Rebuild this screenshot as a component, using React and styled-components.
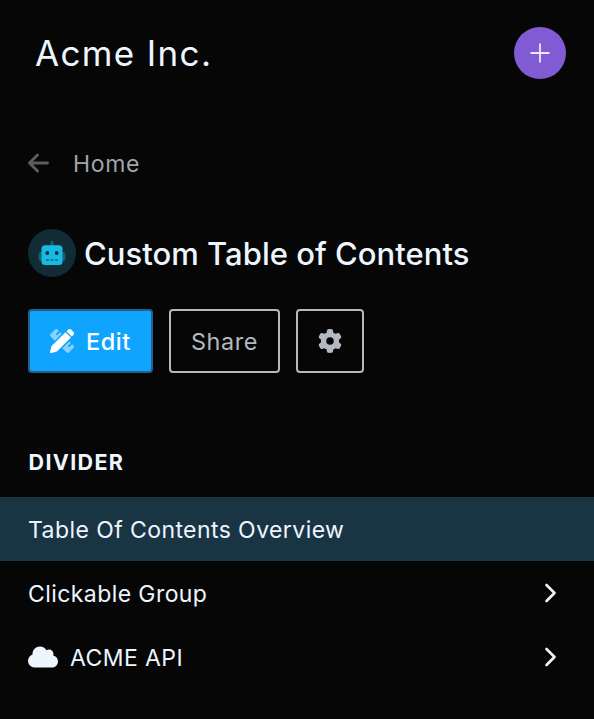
import React from "react";
import styled, { createGlobalStyle } from "styled-components";
import { FaCloud, FaGear } from "react-icons/fa6";

const GlobalStyle = createGlobalStyle`
  * { box-sizing: border-box; }
  body {
    margin: 0;
    background: #060606;
    color: #edf6ff;
    font-family: Inter, "Liberation Sans", sans-serif;
  }
`;

const Sidebar = styled.main`
  width: 594px;
  height: 719px;
  overflow: hidden;
  background: #060606;
`;

const Header = styled.header`
  display: flex;
  align-items: center;
  justify-content: space-between;
  height: 106px;
  padding: 0 28px 0 35px;
`;

const Brand = styled.div`
  font-size: 35px;
  line-height: 44px;
  font-weight: 430;
  letter-spacing: 1.35px;
`;

const AddButton = styled.button`
  display: grid;
  place-items: center;
  width: 52px;
  height: 52px;
  padding: 0;
  border: 0;
  border-radius: 50%;
  background: #805bd4;
  color: #eee8fb;
`;

const BackLink = styled.a`
  display: flex;
  align-items: center;
  gap: 24px;
  height: 32px;
  margin: 42px 28px 0;
  color: #a0a5ab;
  font-size: 23px;
  line-height: 28px;
  letter-spacing: 0.65px;

  svg {
    margin-bottom: 2px;
    color: #5b5e61;
  }
`;

const TitleRow = styled.div`
  display: flex;
  align-items: center;
  gap: 8px;
  height: 48px;
  margin: 49px 28px 0;
`;

const Avatar = styled.div`
  display: grid;
  place-items: center;
  width: 48px;
  height: 48px;
  border-radius: 50%;
  background: #112c34;
`;

const Title = styled.h1`
  margin: 0;
  padding-top: 2px;
  font-size: 31px;
  line-height: 40px;
  font-weight: 500;
  letter-spacing: 0.03px;
`;

const Actions = styled.div`
  display: flex;
  gap: 16px;
  margin: 32px 28px 0;
`;

const Button = styled.button`
  display: flex;
  align-items: center;
  justify-content: center;
  gap: 12px;
  width: ${({ $width }) => $width}px;
  height: 64px;
  padding: 0;
  border: 2px solid ${({ $primary }) => ($primary ? "#245f8e" : "#b3b9bf")};
  border-radius: 4px;
  background: ${({ $primary }) => ($primary ? "#0fa5ff" : "transparent")};
  color: ${({ $primary }) => ($primary ? "#ffffff" : "#b3b9bf")};
  font-family: inherit;
  font-size: 23.4px;
  line-height: 28px;
  font-weight: ${({ $primary }) => ($primary ? 500 : 400)};
  letter-spacing: 0.6px;
`;

const ButtonLabel = styled.span`
  padding-top: 1px;
`;

const SectionLabel = styled.h2`
  margin: 75px 28px 0 28.5px;
  height: 49px;
  font-size: 21.5px;
  line-height: 28px;
  font-weight: 700;
  letter-spacing: 1.35px;
`;

const Navigation = styled.nav`
  display: flex;
  flex-direction: column;
`;

const NavItem = styled.a`
  display: flex;
  align-items: center;
  gap: 12px;
  height: 64px;
  padding: 0 36px 0 28px;
  background: ${({ $active }) => ($active ? "#193443" : "transparent")};
  font-size: 23px;
  line-height: 28px;
  letter-spacing: 0.42px;
`;

const NavLabel = styled.span`
  flex: 1;
  padding-top: 1px;
`;

const CloudIcon = styled(FaCloud)`
  width: 30px;
  height: 24px;
`;

const Chevron = styled.svg`
  width: 14px;
  height: 22px;
`;

const PlusIcon = () => (
  <svg width="22" height="22" viewBox="0 0 22 22" fill="none">
    <path d="M11 1.5v19M1.5 11h19" stroke="currentColor" strokeWidth="1.8" />
  </svg>
);

const BackIcon = () => (
  <svg width="21" height="20" viewBox="0 0 21 20" fill="none">
    <path
      d="M9.5 2L1.5 10l8 8M2 10h17.5"
      stroke="currentColor"
      strokeWidth="2.9"
      strokeLinecap="round"
      strokeLinejoin="round"
    />
  </svg>
);

const RobotIcon = () => (
  <svg width="28" height="24" viewBox="0 0 28 24">
    <path
      d="M12.5 5V1.3a1.5 1.5 0 0 1 3 0V5zM5 11v9H2.5a2 2 0 0 1-2-2v-5a2 2 0 0 1 2-2zm18 0v9h2.5a2 2 0 0 0 2-2v-5a2 2 0 0 0-2-2z"
      fill="#126070"
    />
    <rect x="3.5" y="4.2" width="21" height="19.8" rx="3.5" fill="#16bbe5" />
    <circle cx="9.3" cy="12" r="1.9" fill="#112c34" />
    <circle cx="18.7" cy="12" r="1.9" fill="#112c34" />
    <path d="M8 19h3m1.5 0h3M17 19h3" stroke="#126070" strokeWidth="1.7" />
  </svg>
);

const DraftIcon = () => (
  <svg width="24" height="24" viewBox="0 0 512 512" fill="currentColor">
    <path
      d="M110 10L10 110c-13 13-13 33 0 46l92 92L248 102l-33-33-58 58c-5 5-12 5-17 0l-11-11c-5-5-5-12 0-17l58-58-31-31c-13-13-33-13-46 0zM410 264L264 410l92 92c13 13 33 13 46 0l100-100c13-13 13-33 0-46l-31-31-58 58c-5 5-12 5-17 0l-11-11c-5-5-5-12 0-17l58-58z"
      opacity="0.5"
    />
    <path d="M331 67L33 365 1 484c-3 18 9 30 27 27l119-32 298-298zM498 127l-34 34L351 48l34-34c19-19 49-19 67 0l46 46c19 19 19 49 0 67z" />
  </svg>
);

const ChevronIcon = () => (
  <Chevron viewBox="0 0 14 22" fill="none">
    <path
      d="M2.5 3l8 8-8 8"
      stroke="currentColor"
      strokeWidth="2.6"
      strokeLinecap="round"
      strokeLinejoin="round"
    />
  </Chevron>
);

export default function App() {
  return (
    <>
      <GlobalStyle />
      <Sidebar>
        <Header>
          <Brand>Acme Inc.</Brand>
          <AddButton aria-label="Add"><PlusIcon /></AddButton>
        </Header>
        <BackLink><BackIcon />Home</BackLink>
        <TitleRow>
          <Avatar><RobotIcon /></Avatar>
          <Title>Custom Table of Contents</Title>
        </TitleRow>
        <Actions>
          <Button $primary $width={125}><DraftIcon /><ButtonLabel>Edit</ButtonLabel></Button>
          <Button $width={111}><ButtonLabel>Share</ButtonLabel></Button>
          <Button $width={68} aria-label="Settings"><FaGear size={24} /></Button>
        </Actions>
        <SectionLabel>DIVIDER</SectionLabel>
        <Navigation>
          <NavItem $active><NavLabel>Table Of Contents Overview</NavLabel></NavItem>
          <NavItem><NavLabel>Clickable Group</NavLabel><ChevronIcon /></NavItem>
          <NavItem><CloudIcon /><NavLabel>ACME API</NavLabel><ChevronIcon /></NavItem>
        </Navigation>
      </Sidebar>
    </>
  );
}
